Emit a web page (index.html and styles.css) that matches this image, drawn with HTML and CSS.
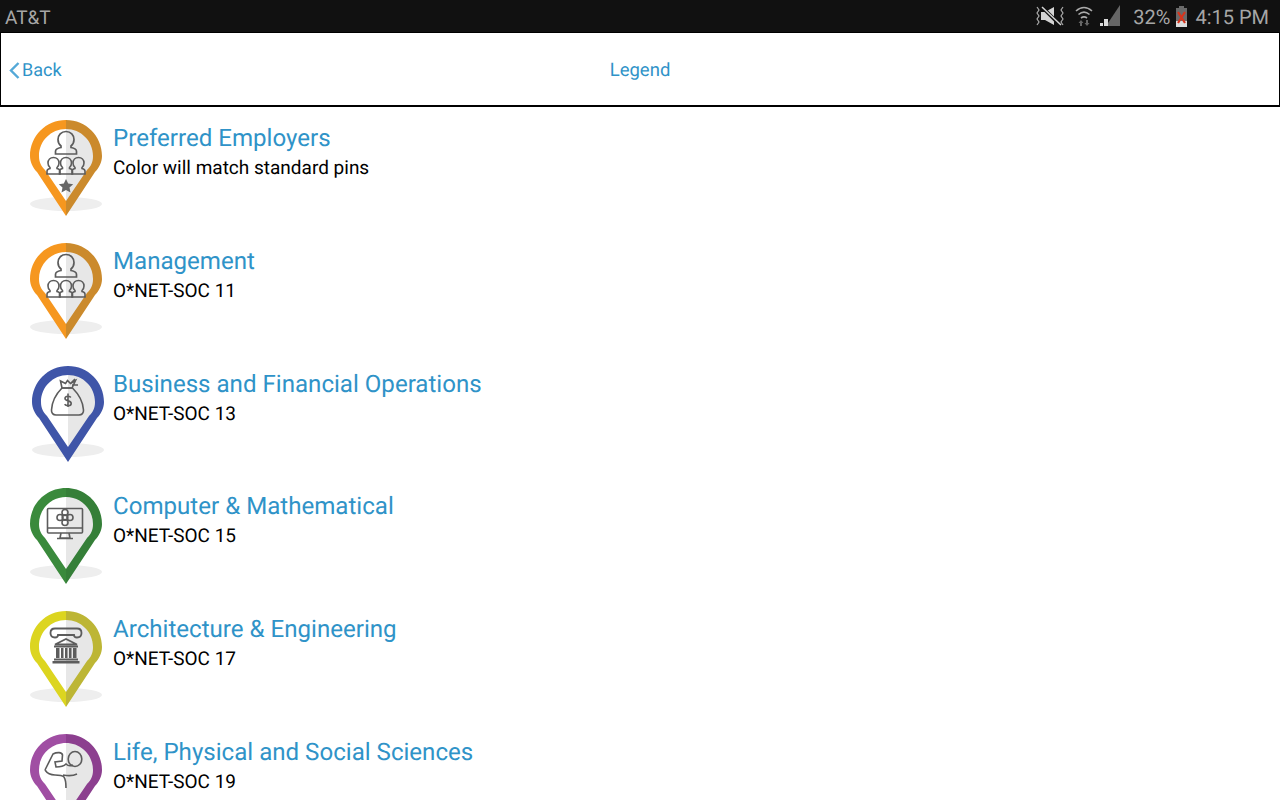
FILE: index.html
```html
<!DOCTYPE html>
<html lang="en">
<head>
  <meta charset="UTF-8">
  <title>Legend</title>
  <link rel="stylesheet" href="styles.css">
</head>
<body>

<svg class="defs" width="0" height="0">
  <defs>
    <symbol id="pin" viewBox="0 0 72 96">
      <ellipse cx="36" cy="84" rx="36" ry="7" fill="#eeeeee"/>
      <path d="M36 0C16 0 0 16 0 36C0 42 3 48 7 52L36 96V0Z" fill="var(--ring)"/>
      <path d="M36 0C56 0 72 16 72 36C72 42 69 48 65 52L36 96V0Z" fill="var(--ring-dark)"/>
      <path d="M36 9C21 9 9 21 9 36C9 42 11 46 15 50L36 81V9Z" fill="#fff"/>
      <path d="M36 9C51 9 63 21 63 36C63 42 61 46 57 50L36 81V9Z" fill="#e7e7e7"/>
    </symbol>
    <g id="person" fill="none" stroke="#5c5c5c" stroke-width="1.700">
      <path d="M36 11.500c-4.800 0-8 3.600-8 8 0 2.800 1.200 5 3 6.500v1.500c-3 .5-5.500 1.500-5.500 4v2.500h21v-2.500c0-2.500-2.500-3.500-5.500-4V26c1.800-1.500 3-3.700 3-6.500 0-4.400-3.200-8-8-8z"/>
    </g>
    <g id="crowd" fill="none" stroke="#5c5c5c" stroke-width="1.600">
      <path id="mate" d="M23.500 37.500c-3.200 0-5.500 2.400-5.500 5.500 0 2 .8 3.500 2 4.500v1c-1.800.3-3 1.200-3 2.800v2.700h13v-2.700c0-1.600-1.200-2.500-3-2.800v-1c1.200-1 2-2.500 2-4.500 0-3.100-2.300-5.500-5.500-5.500z"/>
      <use href="#mate" x="12.500"/>
      <use href="#mate" x="25"/>
    </g>
  </defs>
</svg>

<div class="status-bar">
  <span class="carrier">AT&amp;T</span>
  <div class="status-right">
    <svg class="ic-mute" width="31" height="22" viewBox="0 0 31 22">
      <path d="M6 7h4l9-5v18l-9-5H6z" fill="#d4d4d4"/>
      <path d="M6 1l20 20" stroke="#111" stroke-width="3.500"/>
      <path d="M7 2l19 18" stroke="#d4d4d4" stroke-width="1.500"/>
      <path d="M2 2l2 3-2 3 2 3-2 3 2 3-2 3M28 2l-2 3 2 3-2 3 2 3-2 3 2 3" fill="none" stroke="#aaa" stroke-width="1.200"/>
    </svg>
    <svg class="ic-wifi" width="18" height="22" viewBox="0 0 18 22">
      <path d="M1 6c5-4.500 11-4.500 16 0M3.500 9.500c3.500-3 7.500-3 11 0M6 13c2-1.500 4-1.500 6 0" fill="none" stroke="#aaa" stroke-width="1.600"/>
      <path d="M6 15l-2.500 3H5v3h2v-3h1.500zM12 21l2.500-3H13v-3h-2v3H9.500z" fill="#666"/>
    </svg>
    <svg class="ic-signal" width="21" height="22" viewBox="0 0 21 22">
      <path d="M20 0v21H6z" fill="#666"/>
      <path d="M0 21h3v-3H0zM4 21h4v-7H4z" fill="#ddd"/>
    </svg>
    <span class="battery-text">32%</span>
    <svg class="ic-battery" width="13" height="22" viewBox="0 0 13 22">
      <path d="M4 1h5v2h3v19H1V3h3z" fill="#6a6a6a"/>
      <path d="M1 16h11v6H1z" fill="#ddd"/>
      <path d="M3 7l7 11M10 7L3 18" stroke="#d8341c" stroke-width="2.200"/>
    </svg>
    <span class="clock">4:15 PM</span>
  </div>
</div>

<div class="nav-bar">
  <a class="back" href="#">
    <svg width="11" height="18" viewBox="0 0 11 18"><path d="M9.500 1.500L2 9l7.500 7.500" fill="none" stroke="#54a9d8" stroke-width="2.400"/></svg>
    Back
  </a>
  <span class="nav-title">Legend</span>
</div>

<div class="legend-list">

  <div class="legend-row">
    <svg class="pin pin-orange" width="72" height="96" viewBox="0 0 72 96">
      <use href="#pin" width="72" height="96"/>
      <use href="#person"/>
      <use href="#crowd"/>
      <path d="M36 59l2.200 4.600 5 .6-3.700 3.400 1 5-4.500-2.500-4.500 2.500 1-5-3.700-3.400 5-.6z" fill="#666"/>
    </svg>
    <div class="legend-text">
      <div class="legend-title">Preferred Employers</div>
      <div class="legend-sub">Color will match standard pins</div>
    </div>
  </div>

  <div class="legend-row">
    <svg class="pin pin-orange" width="72" height="96" viewBox="0 0 72 96">
      <use href="#pin" width="72" height="96"/>
      <use href="#person"/>
      <use href="#crowd"/>
    </svg>
    <div class="legend-text">
      <div class="legend-title">Management</div>
      <div class="legend-sub">O*NET-SOC 11</div>
    </div>
  </div>

  <div class="legend-row">
    <svg class="pin pin-blue" width="72" height="96" viewBox="0 0 72 96">
      <use href="#pin" width="72" height="96"/>
      <g fill="none" stroke="#5c5c5c" stroke-width="1.600">
        <path d="M30 22c-5 5-10 13-10.500 22-.2 3 1.500 5 4.500 5h23c3 0 4.700-2 4.500-5-.5-9-6-17-11-22z"/>
        <path d="M30 22l-1.500-7 5 2.500 2-3 3 3 5-3-3.500 7.500zM40 19l6 0M39 17l4-4"/>
        <path d="M38.800 31.500c-1-1.800-5.800-1.800-5.800 1 0 3.200 6.200 1.500 6.200 5 0 2.800-5 2.800-6.600.8M36 27.500v13.500"/>
      </g>
    </svg>
    <div class="legend-text">
      <div class="legend-title">Business and Financial Operations</div>
      <div class="legend-sub">O*NET-SOC 13</div>
    </div>
  </div>

  <div class="legend-row">
    <svg class="pin pin-green" width="72" height="96" viewBox="0 0 72 96">
      <use href="#pin" width="72" height="96"/>
      <g fill="none" stroke="#5c5c5c" stroke-width="1.600">
        <rect x="17.500" y="20.500" width="35" height="24.500" rx="1"/>
        <path d="M17.500 40h35M31 45l-1 5h10l-1-5M27 50.500h16"/>
        <circle cx="35" cy="24.500" r="3"/>
        <circle cx="35" cy="34.500" r="3"/>
        <circle cx="30" cy="29.500" r="3"/>
        <circle cx="40" cy="29.500" r="3"/>
        <circle cx="35" cy="29.500" r="2.800"/>
      </g>
    </svg>
    <div class="legend-text">
      <div class="legend-title">Computer &amp; Mathematical</div>
      <div class="legend-sub">O*NET-SOC 15</div>
    </div>
  </div>

  <div class="legend-row">
    <svg class="pin pin-yellow" width="72" height="96" viewBox="0 0 72 96">
      <use href="#pin" width="72" height="96"/>
      <g fill="none" stroke="#5c5c5c" stroke-width="1.800">
        <path d="M25 26.500c-3 0-4.500-1.500-4.500-4.500s2-4.500 4.500-4.500h22c2.500 0 4.500 1.500 4.500 4.500s-1.500 4.500-4.500 4.500c-2 0-3-1-3-2.500H28c0 1.500-1 2.500-3 2.500z"/>
        <path d="M25 33.500l11-5.500 11 5.500z"/>
      </g>
      <path d="M24 34.500h24v2H24zM26 37h3.500v10H26zM31 37h2.500v10H31zM35 37h2.500v10H35zM39 37h2.500v10H39zM43 37h3.500v10H43zM24 47.500h24v2H24zM22.500 50h27v2.500h-27z" fill="#5c5c5c"/>
    </svg>
    <div class="legend-text">
      <div class="legend-title">Architecture &amp; Engineering</div>
      <div class="legend-sub">O*NET-SOC 17</div>
    </div>
  </div>

  <div class="legend-row">
    <svg class="pin pin-purple" width="72" height="96" viewBox="0 0 72 96">
      <use href="#pin" width="72" height="96"/>
      <g fill="none" stroke="#5c5c5c" stroke-width="1.600">
        <ellipse cx="45" cy="25" rx="6.800" ry="7.500"/>
        <path d="M15 36l8-16c4-2 9-2 9.500 1l-.5 6-7 1 1 5c4 0 8-1 10-3 2 2 5 2 7 1"/>
        <path d="M15 36c2 3 6 5 10 5 4 0 7 0 9 2 2 3 2 7 2 11M33 41c5 1 10 1 14-1"/>
      </g>
    </svg>
    <div class="legend-text">
      <div class="legend-title">Life, Physical and Social Sciences</div>
      <div class="legend-sub">O*NET-SOC 19</div>
    </div>
  </div>

</div>

</body>
</html>
```

FILE: styles.css
```css
html, body { margin: 0; padding: 0; height: 800px; overflow: hidden; }
body { font-family: Roboto, "Liberation Sans", sans-serif; background: #fff; color: #000; text-rendering: geometricPrecision; }
.defs { display: block; height: 0; }

.status-bar { height: 32px; background: #111; color: #a6a6a6; display: flex; align-items: center; justify-content: space-between; padding: 2px 11px 0 5px; box-sizing: border-box; }
.carrier { font-size: 19px; }
.status-right { display: flex; align-items: center; font-size: 20px; }
.status-right svg { display: block; }
.ic-mute { margin-top: -2px; }
.ic-wifi { margin-left: 9px; margin-top: -2px; }
.ic-signal { margin-left: 7px; margin-top: -2px; }
.battery-text { margin-left: 12px; }
.ic-battery { margin-left: 5px; margin-top: -2px; }
.clock { margin-left: 7px; }

.nav-bar { height: 75px; box-sizing: border-box; padding-top: 2px; background: #fff; border: 1px solid #000; border-bottom-width: 2px; display: flex; align-items: center; justify-content: center; color: #2f93c8; font-size: 18.500px; position: relative; }
.back { position: absolute; left: 8px; top: 37px; transform: translateY(-50%); display: flex; align-items: center; gap: 2px; font-size: 18px; color: #2f93c8; text-decoration: none; }
.back svg { display: block; }

.legend-list { padding-top: 13px; }
.legend-row { height: 122.8px; display: flex; align-items: flex-start; }
.pin { display: block; flex: none; margin-left: 30px; margin-right: 11px; }
.legend-text { padding-top: 3px; }
.legend-title { font-size: 24.100px; line-height: 30px; color: #2f93c8; }
.legend-sub { font-size: 19px; line-height: 30px; color: #000; }

.pin-orange { --ring: #f6971f; --ring-dark: #cb8a2c; }
.pin-blue { --ring: #3f55a8; --ring-dark: #3f55a8; margin-left: 32px; margin-right: 9px; }
.pin-green { --ring: #3a8a3c; --ring-dark: #357f38; }
.pin-yellow { --ring: #dcd520; --ring-dark: #bdb635; }
.pin-purple { --ring: #a04ea3; --ring-dark: #8c3f8f; }
```
